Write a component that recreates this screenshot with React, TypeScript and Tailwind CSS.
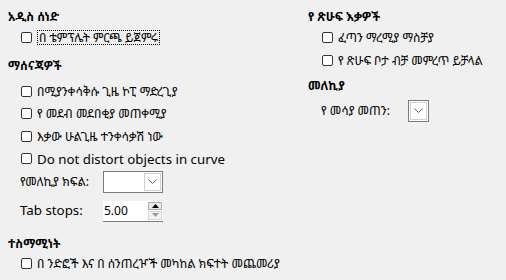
import React from "react";

const font = "font-['Segoe_UI','Noto_Sans','Noto_Sans_Ethiopic','Abyssinica_SIL',sans-serif]";

const Box: React.FC = () => (
  <span className="w-[11px] h-[11px] shrink-0 rounded-[2px] border border-[#333] bg-white" />
);

const Check: React.FC<{ label: string; focused?: boolean; latin?: boolean }> = ({
  label,
  focused,
  latin,
}) => (
  <div className="flex items-center h-[20px] gap-[5px]">
    <Box />
    <span
      className={
        (focused ? "border border-dotted border-black px-[1px] " : "") +
        (latin ? "text-[13.3px] leading-[14px]" : "leading-[13px]")
      }
    >
      {label}
    </span>
  </div>
);

const Heading: React.FC<{ children: React.ReactNode; className?: string }> = ({
  children,
  className = "",
}) => <div className={`h-[18px] flex items-center font-bold ${className}`}>{children}</div>;

const Chevron: React.FC = () => (
  <svg width="9" height="6" viewBox="0 0 9 6" fill="none">
    <path d="M0.5 0.5 L4.5 4.5 L8.5 0.5" stroke="#606060" strokeWidth="1" />
  </svg>
);

const Combo: React.FC<{ className?: string }> = ({ className = "" }) => (
  <div className={`h-[22px] flex border border-[#7a7a7a] bg-white ${className}`}>
    <div className="flex-1" />
    <div className="w-[17px] m-[1px] ml-0 border border-[#d0d0d0] flex items-center justify-center">
      <Chevron />
    </div>
  </div>
);

const Spin: React.FC<{ value: string }> = ({ value }) => (
  <div className="w-[60px] h-[21px] flex bg-white border-b border-[#7a7a7a]">
    <div className="flex-1 flex items-center pl-[1px]">{value}</div>
    <div className="w-[15px] flex flex-col gap-[1px] py-[1px] pr-[1px]">
      <div className="flex-1 border border-[#adadad] bg-[#e9e9e9] flex items-center justify-center">
        <svg width="7" height="4" viewBox="0 0 7 4">
          <path d="M0 4 L3.5 0 L7 4 Z" fill="#000" />
        </svg>
      </div>
      <div className="flex-1 border border-[#d5d5d5] bg-[#f3f3f3] flex items-center justify-center">
        <svg width="7" height="4" viewBox="0 0 7 4">
          <path d="M0 0 L3.5 4 L7 0 Z" fill="#9a9a9a" />
        </svg>
      </div>
    </div>
  </div>
);

export default function App() {
  return (
    <div className={`w-[506px] h-[280px] bg-[#f0f0f0] text-black text-[12px] flex ${font}`}>
      <div className="w-[308px] pl-[8px] pt-[8px]">
        <Heading>አዲስ ሰነድ</Heading>
        <div className="pl-[13px] mt-[1px]">
          <Check label="በ ቴምፕሌት ምርጫ ይጀምሩ" focused />
        </div>
        <Heading className="mt-[10px]">ማሰናጃዎች</Heading>
        <div className="pl-[13px] mt-[6px] flex flex-col gap-[2.5px]">
          <Check label="በሚያንቀሳቅሱ ጊዜ ኮፒ ማድረጊያ" />
          <Check label="የ መደብ መደበቂያ መጠቀሚያ" />
          <Check label="እቃው ሁልጊዜ ተንቀሳቃሽ ነው" />
          <Check label="Do not distort objects in curve" latin />
        </div>
        <div className="pl-[12px] mt-[2px] flex items-center h-[22px]">
          <span className="w-[83px]">የመለኪያ ክፍል:</span>
          <Combo className="w-[60px]" />
        </div>
        <div className="pl-[12px] mt-[8px] flex items-center h-[21px]">
          <span className="w-[83px] text-[13.3px]">Tab stops:</span>
          <Spin value="5.00" />
        </div>
        <Heading className="mt-[13px]">ተስማሚነት</Heading>
        <div className="pl-[13px] mt-[1px]">
          <Check label="በ ንድፎች እና በ ሰንጠረዦች መካከል ክፍተት መጨመሪያ" />
        </div>
      </div>
      <div className="flex-1 pt-[8px]">
        <Heading>የ ጽሁፍ እቃዎች</Heading>
        <div className="pl-[14px] mt-[1px] flex flex-col gap-[3px]">
          <Check label="ፈጣን ማረሚያ ማስቻያ" />
          <Check label="የ ጽሁፍ ቦታ ብቻ መምረጥ ይቻላል" />
        </div>
        <Heading className="mt-[7px]">መለኪያ</Heading>
        <div className="pl-[13px] mt-[5px] flex items-center h-[22px]">
          <span className="w-[87px]">የ መሳያ መጠን:</span>
          <Combo className="w-[21px]" />
        </div>
      </div>
    </div>
  );
}
